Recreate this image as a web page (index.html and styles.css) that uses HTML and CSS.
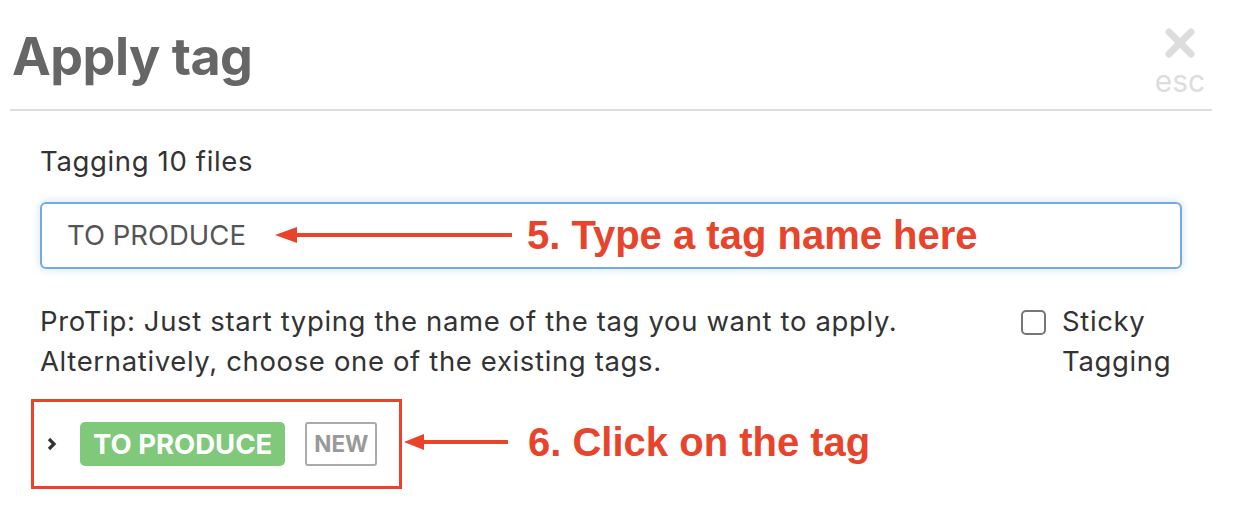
FILE: index.html
```html
<!DOCTYPE html>
<html>
<head>
<meta charset="utf-8">
<link rel="stylesheet" href="styles.css">
</head>
<body>
<div class="modal">
  <div class="header">
    <h1 class="title">Apply tag</h1>
    <div class="close">
      <svg class="close-x" width="32" height="32" viewBox="0 0 32 32"><path d="M5 5 L27 27 M27 5 L5 27" stroke="#dddddd" stroke-width="7" stroke-linecap="round"/></svg>
      <div class="esc">esc</div>
    </div>
  </div>
  <div class="content">
    <div class="count">Tagging 10 files</div>
    <div class="input-wrap">
      <div class="input">TO PRODUCE</div>
      <div class="note note-5">
        <svg width="240" height="20" viewBox="0 0 240 20"><path d="M20 10 H237" stroke="#e8432b" stroke-width="4"/><path d="M0 10 L22 2 L22 18 Z" fill="#e8432b"/></svg>
        <span class="note-text">5. Type a tag name here</span>
      </div>
    </div>
    <div class="tip-row">
      <p class="tip">ProTip: Just start typing the name of the tag you want to apply.<br>Alternatively, choose one of the existing tags.</p>
      <label class="sticky"><span class="box"></span><span class="sticky-text">Sticky<br>Tagging</span></label>
    </div>
    <div class="result-wrap">
      <div class="result">
        <svg class="chev" width="10" height="14" viewBox="0 0 10 14"><path d="M2 2 L7 7 L2 12" stroke="#333" stroke-width="3.2" fill="none"/></svg>
        <span class="tag">TO PRODUCE</span>
        <span class="new">NEW</span>
      </div>
      <div class="note note-6">
        <svg width="110" height="20" viewBox="0 0 110 20"><path d="M18 10 H104" stroke="#e8432b" stroke-width="4"/><path d="M0 10 L20 2 L20 18 Z" fill="#e8432b"/></svg>
        <span class="note-text">6. Click on the tag</span>
      </div>
    </div>
  </div>
</div>
</body>
</html>
```
FILE: styles.css
```css
html, body {
  margin: 0;
  padding: 0;
  background: #fff;
}
body {
  font-family: Inter, "Noto Sans", sans-serif;
  color: #333;
  width: 1240px;
  height: 506px;
  overflow: hidden;
}
.modal {
  padding-left: 10px;
  width: 1202px;
}
.header {
  display: flex;
  justify-content: space-between;
  align-items: flex-start;
  height: 109px;
  border-bottom: 2px solid #dddddd;
}
.title {
  margin: 22px 0 0 2px;
  font-size: 52px;
  line-height: 70px;
  font-weight: 700;
  color: #666;
  letter-spacing: -0.5px;
}
.close {
  display: flex;
  flex-direction: column;
  align-items: center;
  margin-top: 27px;
  margin-right: 4px;
  width: 56px;
}
.close-x {
  display: block;
}
.esc {
  font-family: Inter, sans-serif;
  font-size: 30px;
  line-height: 30px;
  color: #dddddd;
  margin-top: 7px;
}
.content {
  padding-left: 30px;
}
.count {
  margin-top: 35px;
  font-size: 27.5px;
  line-height: 30px;
  letter-spacing: 0.65px;
}
.input-wrap {
  position: relative;
  margin-top: 26px;
}
.input {
  box-sizing: border-box;
  width: 1142px;
  height: 67px;
  border: 2px solid #74a9e2;
  border-radius: 6px;
  box-shadow: 0 0 8px rgba(116, 169, 226, 0.35);
  padding-left: 25px;
  font-size: 27.5px;
  line-height: 63px;
  color: #555;
}
.note {
  position: absolute;
  display: flex;
  align-items: center;
  color: #e8432b;
  font-family: "Liberation Sans", Arial, sans-serif;
  font-weight: 700;
  font-size: 40px;
}
.note svg {
  display: block;
}
.note-text {
  white-space: nowrap;
}
.note-5 {
  left: 235px;
  top: 13px;
  height: 40px;
}
.note-5 .note-text {
  margin-left: 12px;
}
.tip-row {
  display: flex;
  justify-content: space-between;
  margin-top: 32px;
  width: 1140px;
}
.tip {
  margin: 0;
  font-size: 27.5px;
  line-height: 40px;
  letter-spacing: 0.64px;
}
.sticky {
  display: flex;
  align-items: flex-start;
  width: 159px;
}
.box {
  box-sizing: border-box;
  flex: none;
  width: 25px;
  height: 25px;
  border: 2px solid #767676;
  border-radius: 5px;
  margin-top: 9px;
}
.sticky-text {
  margin-left: 16px;
  font-size: 27.5px;
  line-height: 40px;
  letter-spacing: 0.65px;
}
.result-wrap {
  position: relative;
  margin-top: 18px;
}
.result {
  box-sizing: border-box;
  display: flex;
  align-items: center;
  width: 371px;
  height: 90px;
  margin-left: -9px;
  border: 3px solid #e8432b;
  padding-left: 13px;
}
.chev {
  display: block;
}
.tag {
  margin-left: 23px;
  background: #80c97a;
  color: #fff;
  font-weight: 700;
  font-size: 27.5px;
  line-height: 44px;
  height: 44px;
  padding: 0 13px;
  border-radius: 5px;
}
.new {
  box-sizing: border-box;
  margin-left: 20px;
  height: 44px;
  border: 2px solid #aaaaaa;
  border-radius: 3px;
  color: #999;
  font-weight: 700;
  font-size: 22.5px;
  line-height: 40px;
  padding: 0 7px;
}
.note-6 {
  left: 364px;
  top: 23px;
  height: 40px;
}
.note-6 .note-text {
  margin-left: 14px;
}
```
